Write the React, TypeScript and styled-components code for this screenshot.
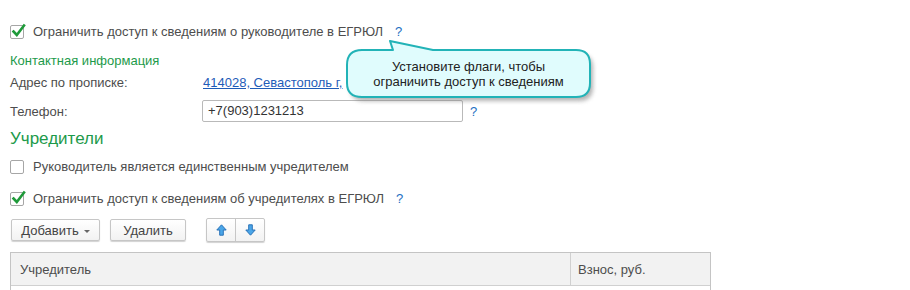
import styled, { createGlobalStyle } from "styled-components";

const GlobalStyle = createGlobalStyle`
    body {
        margin: 0;
        background: #ffffff;
        font-family: Arial, "Liberation Sans", sans-serif;
        font-size: 13px;
        color: #4d4d4d;
    }
`;

const PageSc = styled.div`
    position: relative;
    width: 910px;
    height: 290px;
    overflow: hidden;
    padding: 0 10px;
    box-sizing: border-box;
    display: flex;
    flex-direction: column;
`;

const CheckRowSc = styled.label<{ $top: number }>`
    display: flex;
    align-items: center;
    height: 14px;
    margin-top: ${p => p.$top}px;
    line-height: 14px;
    white-space: nowrap;
`;

const BoxSc = styled.span`
    position: relative;
    width: 12px;
    height: 12px;
    border: 1px solid #a6a6a6;
    border-radius: 2px;
    background: #fff;
    margin-right: 9px;
    flex: none;
`;

const TickSc = styled.svg`
    position: absolute;
    left: 0;
    top: -3px;
`;

const HelpSc = styled.span<{ $gap: number }>`
    color: #1d6fc2;
    margin-left: ${p => p.$gap}px;
    font-size: 13px;
`;

const GroupTitleSc = styled.div<{ $top: number; $big?: boolean }>`
    color: #1d9a4a;
    margin-top: ${p => p.$top}px;
    font-size: ${p => (p.$big ? "17px" : "13px")};
    line-height: ${p => (p.$big ? "20px" : "16px")};
`;

const FieldRowSc = styled.div<{ $top: number; $h: number }>`
    display: flex;
    align-items: center;
    height: ${p => p.$h}px;
    margin-top: ${p => p.$top}px;
    white-space: nowrap;
`;

const FieldLabelSc = styled.div`
    width: 192px;
    flex: none;
`;

const LinkSc = styled.a`
    color: #1f5cb8;
    text-decoration: underline;
    margin-left: 1px;
`;

const InputSc = styled.div`
    width: 254px;
    height: 20px;
    border: 1px solid #b9b9b9;
    border-radius: 2px;
    padding-left: 5px;
    line-height: 20px;
    color: #333;
    box-sizing: content-box;
`;

const ToolbarSc = styled.div`
    display: flex;
    align-items: center;
    margin-top: 12px;
    margin-left: 1px;
    height: 24px;
`;

const ButtonSc = styled.div<{ $w: number; $gap?: number }>`
    width: ${p => p.$w}px;
    height: 22px;
    margin-left: ${p => p.$gap ?? 0}px;
    box-sizing: border-box;
    display: flex;
    align-items: center;
    justify-content: center;
    gap: 5px;
    border: 1px solid #c6c6c6;
    border-radius: 2px;
    background: linear-gradient(#ffffff, #f2f2f2);
    box-shadow: 0 1px 1px rgba(0, 0, 0, 0.18);
    color: #444;
`;

const CaretSc = styled.span`
    width: 0;
    height: 0;
    border-left: 3px solid transparent;
    border-right: 3px solid transparent;
    border-top: 3px solid #666;
    margin-top: 2px;
`;

const ArrowGroupSc = styled.div`
    display: flex;
    margin-left: 20px;
    height: 22px;
    border: 1px solid #c6c6c6;
    border-radius: 2px;
    background: linear-gradient(#ffffff, #f2f2f2);
    box-shadow: 0 1px 1px rgba(0, 0, 0, 0.18);
`;

const ArrowCellSc = styled.div<{ $sep?: boolean }>`
    width: 28px;
    display: flex;
    align-items: center;
    justify-content: center;
    border-left: ${p => (p.$sep ? "1px solid #c6c6c6" : "none")};
`;

const TableSc = styled.div`
    margin-top: 10px;
    width: 699px;
    border: 1px solid #c4c4c4;
    border-bottom: none;
`;

const HeadRowSc = styled.div`
    display: grid;
    grid-template-columns: 559px 1fr;
    height: 32px;
    background: #f2f2f2;
    border-bottom: 1px solid #d0d0d0;
`;

const HeadCellSc = styled.div<{ $pad: number; $sep?: boolean }>`
    display: flex;
    align-items: center;
    padding-left: ${p => p.$pad}px;
    border-left: ${p => (p.$sep ? "1px solid #d0d0d0" : "none")};
    color: #4d4d4d;
`;

const BodyRowSc = styled.div`
    height: 20px;
`;

const BubbleSc = styled.div`
    position: absolute;
    left: 340px;
    top: 35px;
    width: 262px;
    height: 72px;
`;

const BubbleTextSc = styled.div`
    position: absolute;
    left: 7px;
    top: 24px;
    width: 243px;
    text-align: center;
    line-height: 15px;
    color: #222;
`;

const Check = ({ checked }: { checked: boolean }) => (
    <BoxSc>
        {checked && (
            <TickSc width="16" height="16" viewBox="0 0 16 16">
                <path d="M2.5 8.5 L5.8 12 L13 2.5" fill="none" stroke="#1f9a3a" strokeWidth="2.6" strokeLinecap="square" />
            </TickSc>
        )}
    </BoxSc>
);

const Arrow = ({ down }: { down?: boolean }) => (
    <svg width="11" height="12" viewBox="0 0 11 12" style={{ transform: down ? "rotate(180deg)" : undefined }}>
        <path d="M5.5 0.8 L10.2 6 L7.3 6 L7.3 11.2 L3.7 11.2 L3.7 6 L0.8 6 Z" fill="#4aa6e8" stroke="#2b73b8" strokeWidth="1" strokeLinejoin="round" />
    </svg>
);

const Bubble = () => (
    <BubbleSc>
        <svg width="262" height="72" viewBox="0 0 262 72">
            <defs>
                <filter id="sh" x="-10%" y="-20%" width="120%" height="150%">
                    <feGaussianBlur stdDeviation="2" />
                </filter>
            </defs>
            <path
                d="M22 15 L53 15 L50 6 L93 15 L236 15 Q250 15 250 29 L250 48 Q250 62 236 62 L22 62 Q7 62 7 48 L7 30 Q7 15 22 15 Z"
                fill="#808080"
                opacity="0.6"
                transform="translate(3 4)"
                filter="url(#sh)"
            />
            <path
                d="M22 15 L53 15 L50 6 L93 15 L236 15 Q250 15 250 29 L250 48 Q250 62 236 62 L22 62 Q7 62 7 48 L7 30 Q7 15 22 15 Z"
                fill="#e0fcfd"
                stroke="#22b3b7"
                strokeWidth="2"
                strokeLinejoin="round"
            />
        </svg>
        <BubbleTextSc>
            Установите флаги, чтобы
            <br />
            ограничить доступ к сведениям
        </BubbleTextSc>
    </BubbleSc>
);

const App = () => {
    return (
        <>
            <GlobalStyle />
            <PageSc>
                <CheckRowSc $top={25}>
                    <Check checked />
                    Ограничить доступ к сведениям о руководителе в ЕГРЮЛ
                    <HelpSc $gap={12}>?</HelpSc>
                </CheckRowSc>
                <GroupTitleSc $top={14}>Контактная информация</GroupTitleSc>
                <FieldRowSc $top={6} $h={16}>
                    <FieldLabelSc>Адрес по прописке:</FieldLabelSc>
                    <LinkSc>414028, Севастополь г,</LinkSc>
                </FieldRowSc>
                <FieldRowSc $top={10} $h={22}>
                    <FieldLabelSc>Телефон:</FieldLabelSc>
                    <InputSc>+7(903)1231213</InputSc>
                    <HelpSc $gap={7}>?</HelpSc>
                </FieldRowSc>
                <GroupTitleSc $top={7} $big>Учредители</GroupTitleSc>
                <CheckRowSc $top={11}>
                    <Check checked={false} />
                    Руководитель является единственным учредителем
                </CheckRowSc>
                <CheckRowSc $top={18}>
                    <Check checked />
                    Ограничить доступ к сведениям об учредителях в ЕГРЮЛ
                    <HelpSc $gap={12}>?</HelpSc>
                </CheckRowSc>
                <ToolbarSc>
                    <ButtonSc $w={89}>
                        Добавить <CaretSc />
                    </ButtonSc>
                    <ButtonSc $w={76} $gap={10}>
                        Удалить
                    </ButtonSc>
                    <ArrowGroupSc>
                        <ArrowCellSc>
                            <Arrow />
                        </ArrowCellSc>
                        <ArrowCellSc $sep>
                            <Arrow down />
                        </ArrowCellSc>
                    </ArrowGroupSc>
                </ToolbarSc>
                <TableSc>
                    <HeadRowSc>
                        <HeadCellSc $pad={9}>Учредитель</HeadCellSc>
                        <HeadCellSc $pad={7} $sep>
                            Взнос, руб.
                        </HeadCellSc>
                    </HeadRowSc>
                    <BodyRowSc />
                </TableSc>
                <Bubble />
            </PageSc>
        </>
    );
};

export default App;
